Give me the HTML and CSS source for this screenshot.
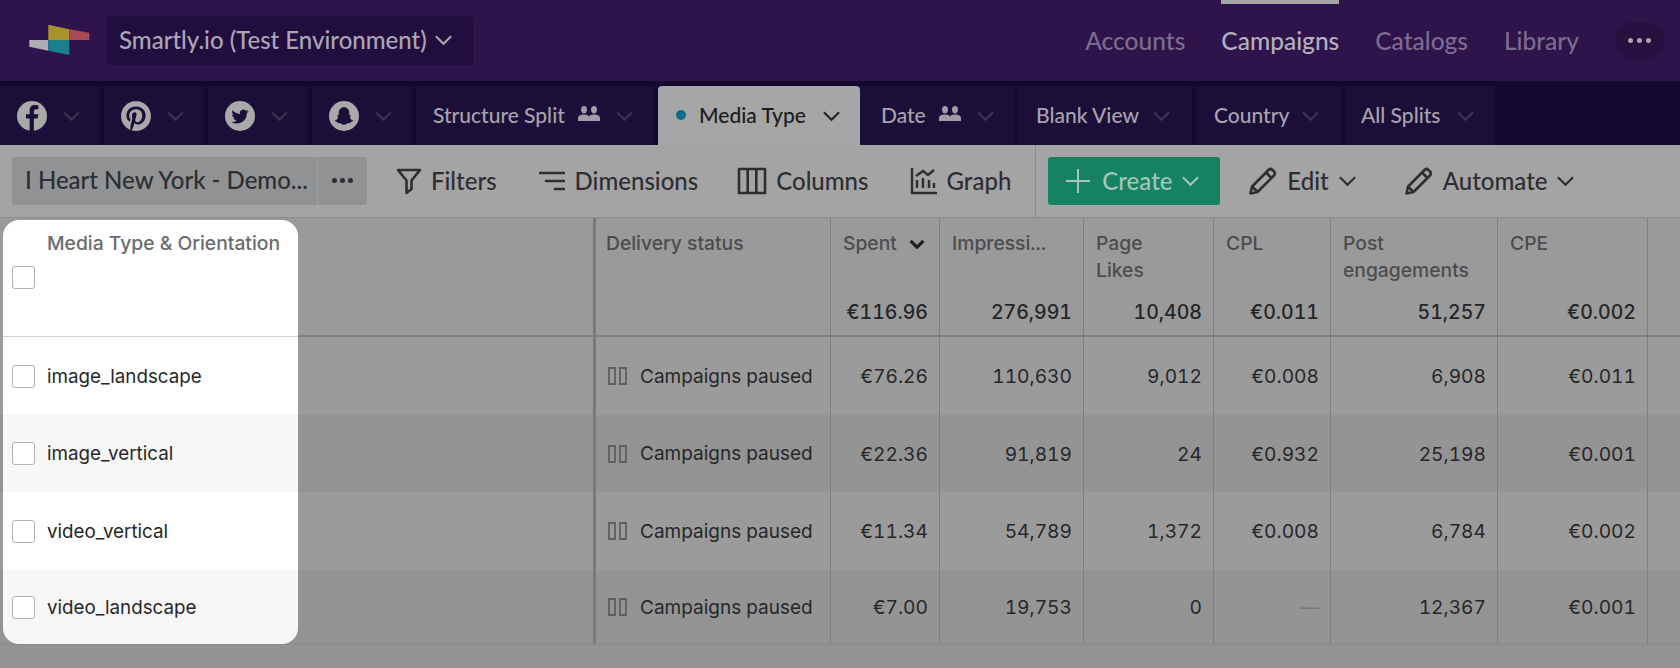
FILE: index.html
```html
<!DOCTYPE html>
<html lang="en">
<head>
<meta charset="utf-8">
<title>Smartly.io</title>
<link rel="stylesheet" href="styles.css">
</head>
<body>
<svg class="defs" width="0" height="0" aria-hidden="true">
  <symbol id="chev" viewBox="0 0 20 12"><path d="M2 2l8 8 8-8" fill="none" stroke="currentColor" stroke-width="2.2"/></symbol>
  <symbol id="chevb" viewBox="0 0 20 12"><path d="M2 2l8 8 8-8" fill="none" stroke="currentColor" stroke-width="4"/></symbol>
  <symbol id="pencil" viewBox="0 0 30 30"><path d="M2.5 27.500l1.600-7L20.500 4c1.200-1.200 2.800-1.200 4 0l1.500 1.500c1.200 1.200 1.200 2.800 0 4L9.500 26zM4.100 20.500l5.400 5.500M18 6.500l5.500 5.500" fill="none" stroke="currentColor" stroke-width="2.600" stroke-linejoin="round"/></symbol>
  <symbol id="people" viewBox="0 0 22 17"><path d="M6 1c2 0 3 1.600 3 3.500S8 8.500 6 8.500 3 6.400 3 4.500 4 1 6 1zM16 1c2 0 3 1.600 3 3.500s-1 4-3 4-3-2.100-3-4S14 1 16 1zM0 16v-3c0-2.500 3-3.500 6-3.500s5 .8 5 2.500c0-1.700 2-2.500 5-2.500s6 1 6 3.500v3z" fill="currentColor"/></symbol>
  <symbol id="pause" viewBox="0 0 20 18"><path d="M1 1h6v16H1zM12 1h6v16h-6z" fill="none" stroke="currentColor" stroke-width="1.800"/></symbol>
</svg>

<header class="topbar">
  <svg class="logo" viewBox="29 24 61 32" width="61" height="32">
    <polygon points="48.300,24.700 69.300,29.300 69.300,40 48.300,40" fill="#a8942e"/>
    <polygon points="69.300,29.300 89.300,32.700 89.300,40 69.300,40" fill="#a84a58"/>
    <polygon points="29.300,40 48.300,40 48.300,50.700 29.300,46.700" fill="#b0acb4"/>
    <polygon points="48.300,40 69.300,40 69.300,55 48.300,50.700" fill="#19808e"/>
  </svg>
  <button class="account"><span>Smartly.io (Test Environment)</span><svg class="chev-md"><use href="#chev"/></svg></button>
  <nav class="mainnav">
    <a class="navlink">Accounts</a>
    <a class="navlink active">Campaigns</a>
    <a class="navlink">Catalogs</a>
    <a class="navlink">Library</a>
    <button class="more"><i></i><i></i><i></i></button>
  </nav>
</header>

<div class="tabs">
  <div class="tab icon-tab">
    <svg class="social" viewBox="0 0 24 24"><circle cx="12" cy="12" r="12" class="disc"/><path class="glyph" d="M13.500 24V14h3l.5-3.500h-3.500V8.300c0-1 .4-1.800 1.900-1.800h1.700V3.400c-.6 0-1.600-.2-2.600-.2-2.700 0-4.400 1.600-4.400 4.500v2.800H7.200V14h2.900v10z"/></svg>
    <svg class="chev-tab"><use href="#chev"/></svg>
  </div>
  <div class="tab icon-tab">
    <svg class="social" viewBox="0 0 24 24"><path class="disc" d="M12.017 0C5.396 0 .029 5.367.029 11.987c0 5.079 3.158 9.417 7.618 11.162-.105-.949-.199-2.403.041-3.439.219-.937 1.406-5.957 1.406-5.957s-.359-.72-.359-1.781c0-1.663.967-2.911 2.168-2.911 1.024 0 1.518.769 1.518 1.688 0 1.029-.653 2.567-.992 3.992-.285 1.193.6 2.165 1.775 2.165 2.128 0 3.768-2.245 3.768-5.487 0-2.861-2.063-4.869-5.008-4.869-3.41 0-5.409 2.562-5.409 5.199 0 1.033.394 2.143.889 2.741.099.12.112.225.085.345-.09.375-.293 1.199-.334 1.363-.053.225-.172.271-.401.165-1.495-.69-2.433-2.878-2.433-4.646 0-3.776 2.748-7.252 7.92-7.252 4.158 0 7.392 2.967 7.392 6.923 0 4.135-2.607 7.462-6.233 7.462-1.214 0-2.354-.629-2.758-1.379l-.749 2.848c-.269 1.045-1.004 2.352-1.498 3.146 1.123.345 2.306.535 3.55.535 6.607 0 11.985-5.365 11.985-11.987C23.97 5.39 18.592.026 11.985.026L12.017 0z"/></svg>
    <svg class="chev-tab"><use href="#chev"/></svg>
  </div>
  <div class="tab icon-tab">
    <svg class="social" viewBox="0 0 24 24"><circle cx="12" cy="12" r="12" class="disc"/><g transform="translate(5.200 5.600) scale(.57)"><path class="glyph" d="M23.953 4.570a10 10 0 01-2.825.775 4.958 4.958 0 002.163-2.723c-.951.555-2.005.959-3.127 1.184a4.920 4.920 0 00-8.384 4.482C7.690 8.095 4.067 6.130 1.640 3.162a4.822 4.822 0 00-.666 2.475c0 1.710.870 3.213 2.188 4.096a4.904 4.904 0 01-2.228-.616v.06a4.923 4.923 0 003.946 4.827 4.996 4.996 0 01-2.212.085 4.936 4.936 0 004.604 3.417 9.867 9.867 0 01-6.102 2.105c-.39 0-.779-.023-1.170-.067a13.995 13.995 0 007.557 2.209c9.053 0 13.998-7.496 13.998-13.985 0-.21 0-.42-.015-.63A9.935 9.935 0 0024 4.590z"/></g></svg>
    <svg class="chev-tab"><use href="#chev"/></svg>
  </div>
  <div class="tab icon-tab">
    <svg class="social" viewBox="0 0 24 24"><circle cx="12" cy="12" r="12" class="disc"/><path class="glyph" d="M12 5c2.600 0 4.200 2 4.200 4.400v1.800l1.500.5-1 1.200c.4 1.400 1.600 2.300 2.800 2.700-.3.8-1.400 1-2.200 1.200-.2.600-.3 1-1 .9-1.600-.2-2.300 1.300-4.300 1.300s-2.700-1.500-4.300-1.300c-.7.1-.8-.3-1-.9-.8-.2-1.900-.4-2.200-1.200 1.200-.4 2.400-1.300 2.800-2.700l-1-1.200 1.500-.5V9.400C7.800 7 9.400 5 12 5z"/></svg>
    <svg class="chev-tab"><use href="#chev"/></svg>
  </div>
  <div class="tab tab-split"><span>Structure Split</span><svg class="people"><use href="#people"/></svg><svg class="chev-tab"><use href="#chev"/></svg></div>
  <div class="tab tab-active"><i class="dot"></i><span>Media Type</span><svg class="chev-active"><use href="#chev"/></svg></div>
  <div class="tab tab-date"><span>Date</span><svg class="people"><use href="#people"/></svg><svg class="chev-tab"><use href="#chev"/></svg></div>
  <div class="tab tab-blank"><span>Blank View</span><svg class="chev-tab"><use href="#chev"/></svg></div>
  <div class="tab tab-country"><span>Country</span><svg class="chev-tab"><use href="#chev"/></svg></div>
  <div class="tab tab-all"><span>All Splits</span><svg class="chev-tab"><use href="#chev"/></svg></div>
</div>

<div class="toolbar">
  <div class="project">
    <span class="project-name">I Heart New York - Demo...</span>
    <span class="project-more"><i></i><i></i><i></i></span>
  </div>
  <div class="tool tool-filters">
    <svg class="ico" viewBox="0 0 26 28" width="26" height="28"><path d="M2 3h22l-8.500 10.500V22l-5 4V13.500z" fill="none" stroke="currentColor" stroke-width="2.600" stroke-linejoin="round"/></svg>
    <span>Filters</span>
  </div>
  <div class="tool tool-dims">
    <svg class="ico" viewBox="0 0 26 24" width="26" height="24"><path d="M1 4h24M7 12h18M16 20h9" fill="none" stroke="currentColor" stroke-width="2.600" stroke-linecap="round"/></svg>
    <span>Dimensions</span>
  </div>
  <div class="tool tool-cols">
    <svg class="ico" viewBox="0 0 30 28" width="30" height="28"><path d="M2 2h26v24H2zM10.700 2v24M19.300 2v24" fill="none" stroke="currentColor" stroke-width="2.600" stroke-linejoin="round"/></svg>
    <span>Columns</span>
  </div>
  <div class="tool tool-graph">
    <svg class="ico" viewBox="0 0 27 28" width="27" height="28"><path d="M2 1v25h25M7 21v-8M13 21V11M19 21v-8M24 21v-5M6 9l7-5 5 4 6-5" fill="none" stroke="currentColor" stroke-width="2.400"/></svg>
    <span>Graph</span>
  </div>
  <div class="divider"></div>
  <button class="create">
    <svg viewBox="0 0 24 24" width="24" height="24"><path d="M12 0v24M0 12h24" stroke="currentColor" stroke-width="2"/></svg>
    <span>Create</span>
    <svg class="chev-md chev-create"><use href="#chev"/></svg>
  </button>
  <div class="tool tool-edit">
    <svg class="ico" width="30" height="30"><use href="#pencil"/></svg>
    <span>Edit</span>
    <svg class="chev-md"><use href="#chev"/></svg>
  </div>
  <div class="tool tool-auto">
    <svg class="ico" width="30" height="30"><use href="#pencil"/></svg>
    <span>Automate</span>
    <svg class="chev-md"><use href="#chev"/></svg>
  </div>
</div>

<div class="table">
  <div class="row head">
    <div class="cell name first">
      <div class="head-label">Media Type &amp; Orientation</div>
      <i class="check head-check"></i>
    </div>
    <div class="cell blank"></div>
    <div class="cell status"><div class="head-label">Delivery status</div></div>
    <div class="cell num"><div class="head-label spent">Spent<svg class="chev-sort"><use href="#chevb"/></svg></div><div class="total">€116.96</div></div>
    <div class="cell num"><div class="head-label">Impressi...</div><div class="total">276,991</div></div>
    <div class="cell num"><div class="head-label">Page<br>Likes</div><div class="total">10,408</div></div>
    <div class="cell num"><div class="head-label">CPL</div><div class="total">€0.011</div></div>
    <div class="cell num"><div class="head-label">Post<br>engagements</div><div class="total">51,257</div></div>
    <div class="cell num"><div class="head-label">CPE</div><div class="total">€0.002</div></div>
    <div class="cell end"></div>
  </div>

  <div class="row body">
    <div class="cell name"><i class="check"></i><span>image_landscape</span></div>
    <div class="cell blank"></div>
    <div class="cell status"><svg class="pause"><use href="#pause"/></svg><span>Campaigns paused</span></div>
    <div class="cell num">€76.26</div><div class="cell num">110,630</div><div class="cell num">9,012</div><div class="cell num">€0.008</div><div class="cell num">6,908</div><div class="cell num">€0.011</div>
    <div class="cell end"></div>
  </div>
  <div class="row body alt">
    <div class="cell name"><i class="check"></i><span>image_vertical</span></div>
    <div class="cell blank"></div>
    <div class="cell status"><svg class="pause"><use href="#pause"/></svg><span>Campaigns paused</span></div>
    <div class="cell num">€22.36</div><div class="cell num">91,819</div><div class="cell num">24</div><div class="cell num">€0.932</div><div class="cell num">25,198</div><div class="cell num">€0.001</div>
    <div class="cell end"></div>
  </div>
  <div class="row body">
    <div class="cell name"><i class="check"></i><span>video_vertical</span></div>
    <div class="cell blank"></div>
    <div class="cell status"><svg class="pause"><use href="#pause"/></svg><span>Campaigns paused</span></div>
    <div class="cell num">€11.34</div><div class="cell num">54,789</div><div class="cell num">1,372</div><div class="cell num">€0.008</div><div class="cell num">6,784</div><div class="cell num">€0.002</div>
    <div class="cell end"></div>
  </div>
  <div class="row body alt last">
    <div class="cell name"><i class="check"></i><span>video_landscape</span></div>
    <div class="cell blank"></div>
    <div class="cell status"><svg class="pause"><use href="#pause"/></svg><span>Campaigns paused</span></div>
    <div class="cell num">€7.00</div><div class="cell num">19,753</div><div class="cell num">0</div><div class="cell num dash">—</div><div class="cell num">12,367</div><div class="cell num">€0.001</div>
    <div class="cell end"></div>
  </div>
</div>
</body>
</html>
```
FILE: styles.css
```css
* { box-sizing: border-box; }
html, body { margin: 0; padding: 0; height: 668px; overflow: hidden; }
body { background: #939393; font-family: "Lato", "Liberation Sans", sans-serif; font-weight: 500; color: #2b2b2e; }
.defs { display: block; height: 0; }
button { border: 0; font: inherit; padding: 0; }
svg { flex: none; display: block; }

/* top bar */
.topbar { height: 81px; background: #2e144b; display: flex; align-items: center; padding-left: 29px; }
.logo { margin-right: 17px; margin-top: -1px; }
.account { width: 366px; height: 49px; margin-top: -1px; background: #220d3f; color: #aba6b4; font-size: 24px; border-radius: 3px; display: flex; align-items: center; padding-left: 12px; gap: 7px; }
.account span { margin-top: -2px; }
.chev-md { width: 19px; height: 12px; }
.mainnav { margin-left: auto; display: flex; align-items: center; gap: 36px; height: 81px; padding-right: 16px; }
.navlink { font-size: 24.500px; color: #7c6c8f; height: 81px; display: flex; align-items: center; border-top: 4px solid transparent; padding-bottom: 4px; }
.navlink.active { color: #b4b0ba; border-top-color: #a6a6a6; }
.more { width: 49px; height: 38px; border-radius: 19px; background: #27103f; display: flex; align-items: center; justify-content: center; gap: 4px; }
.more i { width: 5px; height: 5px; border-radius: 50%; background: #a9a4b0; }

/* tabs */
.tabs { height: 64px; background: #120830; display: flex; gap: 4px; padding-top: 5px; }
.tab { height: 59px; background: #1b0f39; border-radius: 4px 4px 0 0; display: flex; align-items: center; color: #a7a3ae; font-size: 21px; }
.tab span { margin-top: -3px; }
.icon-tab { width: 100px; padding-left: 17px; gap: 15px; }
.social { width: 30px; height: 30px; }
.disc { fill: #a9a9a9; }
.glyph { fill: #1b0f39; }
.chev-tab { width: 19px; height: 12px; color: #3c3350; }
.chev-active { width: 19px; height: 12px; color: #232323; margin-left: 16px; }
.people { width: 22px; height: 17px; color: #a09ca8; margin-left: 13px; margin-top: -4px; margin-right: 15px; }
.tab-split { width: 237px; padding-left: 17px; }
.tab-active { width: 202px; margin-left: 1px; padding-left: 17px; background: #a6a6a6; color: #1c1c20; }
.tab-date { width: 154px; padding-left: 21px; margin-left: -4px; }
.tab-blank { width: 174px; padding-left: 18px; gap: 13px; }
.tab-country { width: 145px; padding-left: 18px; gap: 12px; }
.tab-all { width: 150px; padding-left: 16px; gap: 15px; }
.dot { width: 10px; height: 10px; border-radius: 50%; background: #0f6c8c; margin-left: 1px; margin-right: 13px; margin-top: -1px; }

/* toolbar */
.toolbar { height: 73px; background: #a4a4a4; border-bottom: 1px solid #8a8a8a; display: flex; align-items: center; padding-left: 12px; font-size: 24px; color: #2e2e32; }
.project { width: 355px; height: 48px; background: #919294; border-radius: 3px; display: flex; align-items: center; margin-top: -1px; }
.project-name { width: 306px; padding-left: 13px; white-space: nowrap; border-right: 1px solid #a0a0a0; height: 48px; line-height: 46px; }
.project-more { flex: 1; display: flex; justify-content: center; gap: 3px; }
.project-more i { width: 5px; height: 5px; border-radius: 50%; background: #2e2e32; }
.tool { display: flex; align-items: center; gap: 10px; margin-top: -1px; }
.tool span { margin-top: -1px; }
.ico { color: #2e2e32; }
.tool-filters { margin-left: 29px; gap: 9px; }
.tool-dims { margin-left: 42px; }
.tool-cols { margin-left: 39px; gap: 9px; }
.tool-graph { margin-left: 42px; gap: 9px; }
.divider { width: 1px; height: 72px; background: #8c8c8c; margin-left: 24px; align-self: flex-start; }
.create { margin-left: 12px; margin-top: -1px; width: 172px; height: 48px; background: #148263; color: #a6c4b8; border-radius: 3px; display: flex; align-items: center; padding-left: 18px; gap: 12px; }
.create span { margin-top: -1px; }
.chev-create { margin-left: -3px; }
.tool-edit { margin-left: 28px; gap: 9px; }
.tool-auto { margin-left: 47px; gap: 9px; }

/* table */
.table { font-family: "Inter", "Liberation Sans", sans-serif; font-size: 18.800px; font-weight: 400; color: #27272a; font-variant-numeric: tabular-nums; }
.row { display: grid; grid-template-columns: 295px 295px 237px 109px 144px 130px 117px 167px 150px 1fr; padding-left: 3px; background: #9a9a9a; }
.head { height: 119px; }
.body { height: 78px; background: #9b9b9b; }
.body.alt { background: #949494; height: 77px; }
.body.last { height: 74px; box-shadow: 0 1px 0 #8a8a8a; }
.cell { border-left: 1px solid #7f7f7f; padding: 0 11px 0 12px; display: flex; align-items: center; min-width: 0; }
.cell.name { border-left: 0; padding: 0 0 0 9px; background: #fff; gap: 12px; }
.alt .cell.name { background: #f7f7f7; }
.cell.name .check { flex: none; }
.check { display: block; width: 23px; height: 23px; border: 1.500px solid #b2b2b2; border-radius: 3px; background: #fff; }
.cell.blank { border-left: 0; }
.cell.status { border-left: 3px solid #7a7a7a; padding-left: 12px; gap: 12px; font-size: 19px; }
.pause { width: 20px; height: 18px; color: #5f5f5f; }
.cell.num { justify-content: flex-end; font-size: 19.200px; }
.cell.dash { color: #767676; }

.head .cell { display: block; padding-top: 12px; position: relative; border-bottom: 2px solid #808080; }
.head .cell.name { margin-top: 2px; padding: 10px 0 0 44px; border-radius: 16px 16px 0 0; border-bottom: 1px solid #d2d2d2; }
.head .cell.blank { border-left: 0; }
.head .cell.status { padding-left: 10px; }
.head-label { color: #4c4c50; line-height: 27px; font-size: 19.300px; font-weight: 500; text-align: left; white-space: nowrap; }
.name .head-label { color: #6b6b6e; }
.head-check { position: absolute; left: 9px; top: 46px; }
.spent { display: flex; align-items: center; gap: 12px; }
.chev-sort { width: 16px; height: 10px; color: #202022; }
.total { position: absolute; right: 11px; top: 81px; line-height: 27px; font-weight: 500; font-size: 19.500px; color: #26262a; }
.last .cell.name { border-radius: 0 0 16px 16px; }
```
